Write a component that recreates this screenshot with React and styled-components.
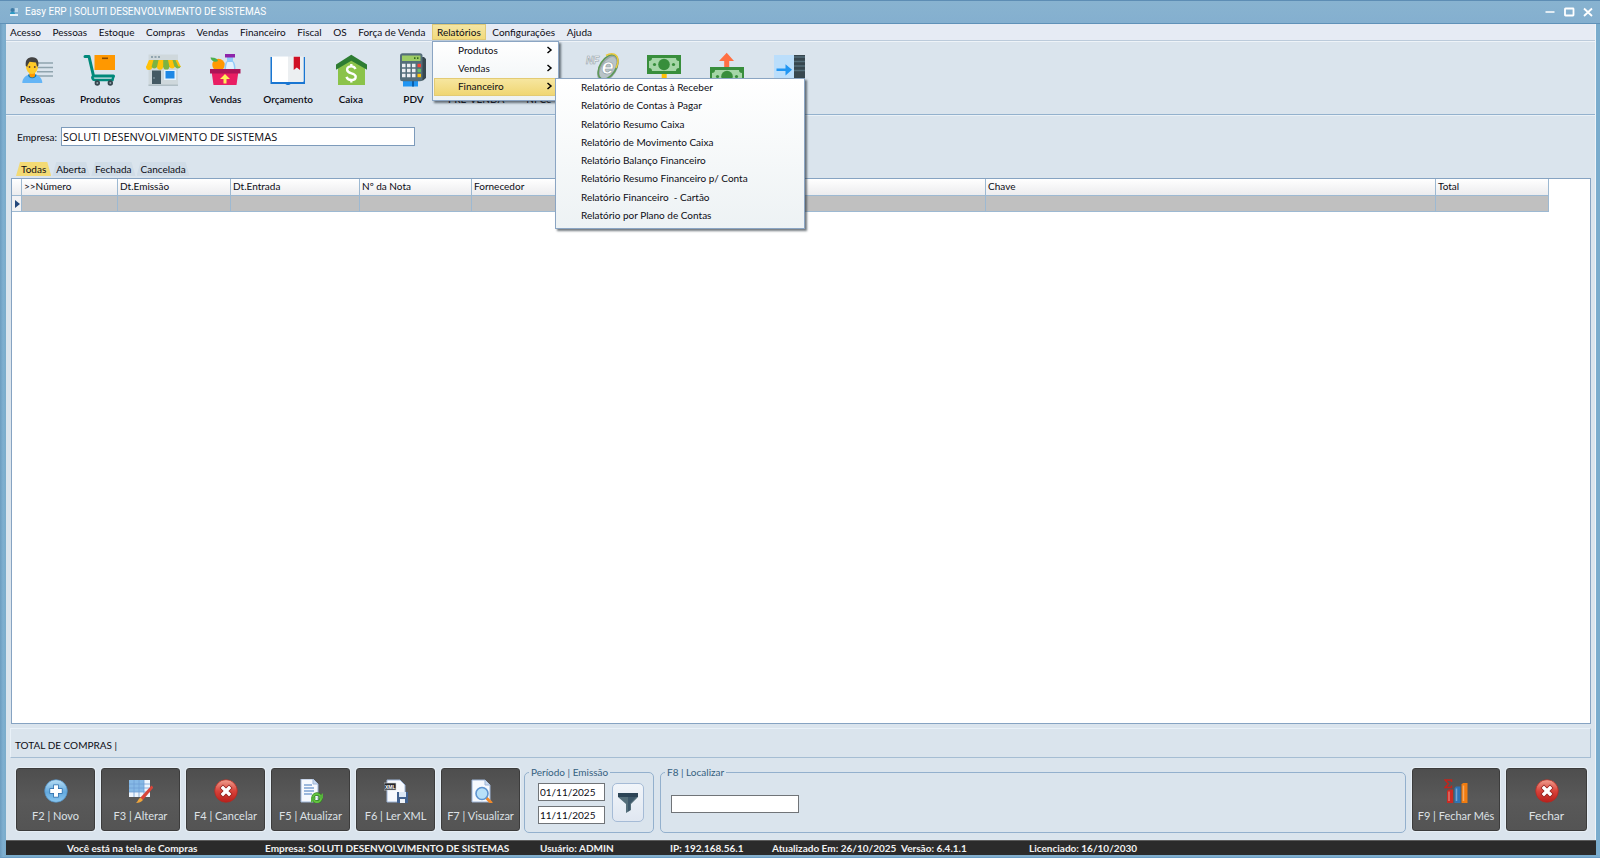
import React from 'react';
import styled, { createGlobalStyle } from 'styled-components';

const GlobalStyle = createGlobalStyle`
  *, *::before, *::after { box-sizing: border-box; }
  body { margin: 0; background: #dae4ed; }
  body, button, input, table, legend {
    font-family: Lato, "Open Sans", sans-serif;
    font-size: 10px;
    line-height: 14px;
    color: #0c0c14;
  }
  ul { list-style: none; margin: 0; padding: 0; }
  svg { display: block; flex: none; }
`;

const Window = styled.div`
  min-height: 100vh;
  display: flex;
  flex-direction: column;
  background: linear-gradient(90deg, #6c9cbf, #7fafd0 3px, #7aaccb 6px, #86b0cd 50%, #7aaccd);
  border-top: 1px solid #5d8db4;
  border-bottom: 1px solid #6a9cc4;
  padding: 0 4px 2px 6px;
`;

const TitleBar = styled.header`
  height: 23px;
  display: flex;
  align-items: center;
  gap: 6px;
  padding: 0 5px 0 9px;
  margin: 0 -4px 0 -6px;
  background: linear-gradient(#88b3d0, #84afcf);
  border-bottom: 1px solid #5f91b8;
`;

const Title = styled.h1`
  flex: 1;
  margin: 0;
  font: 400 10px/14px Roboto, sans-serif;
  color: #fff;
`;

const CaptionButton = styled.button`
  width: 13px;
  height: 14px;
  padding: 0;
  border: 0;
  background: none;
`;

const Client = styled.main`
  flex: 1;
  display: flex;
  flex-direction: column;
  background: #dae4ed;
  border-right: 1px solid #eef4f9;
`;

const MenuBar = styled.nav`
  height: 17px;
  background: #e6ebf4;
  border-bottom: 1px solid #bccbdb;
`;

const MenuList = styled.ul`
  display: flex;
  justify-content: space-between;
  width: 591px;
`;

const MenuEntry = styled.li`
  position: relative;
  background: ${(p) => (p.$open ? 'linear-gradient(#f4e6a8, #f2da78)' : 'none')};
  box-shadow: ${(p) => (p.$open ? 'inset 0 0 0 1px #e0c977' : 'none')};
`;

const MenuButton = styled.button`
  height: 16px;
  padding: 0 5px;
  border: 0;
  background: none;
  white-space: nowrap;
  ${MenuEntry}:first-child & { padding-left: 4px; }
`;

const Popup = styled.ul`
  position: absolute;
  z-index: 2;
  top: 17px;
  left: 0;
  width: 127px;
  padding: 0 1px 4px;
  background: linear-gradient(#ffffff, #edf2f4);
  border: 1px solid #8ba5c3;
  box-shadow: 2px 2px 2px rgba(40, 50, 60, 0.65);
`;

const SubPopup = styled(Popup)`
  display: grid;
  grid-auto-rows: 1fr;
  top: 0;
  left: 121px;
  width: 250px;
  height: 151px;
  padding-bottom: 3px;
`;

const PopupItem = styled.li`
  position: relative;
  background: ${(p) => (p.$active ? 'linear-gradient(#f7e7a2, #efd570)' : 'none')};
  box-shadow: ${(p) => (p.$active ? 'inset 0 0 0 1px #e3cb74' : 'none')};
`;

const PopupButton = styled.button`
  display: flex;
  align-items: center;
  justify-content: space-between;
  width: 100%;
  height: 18px;
  padding: 0 4px 2px 24px;
  border: 0;
  background: none;
  text-align: left;
  white-space: pre;
`;

const Toolbar = styled.nav`
  border-top: 1px solid #eef3f8;
  border-bottom: 1px solid #93b1cd;
  box-shadow: 0 1px 0 #eaf1f7;
  height: 74px;
  padding: 10px 0 0;
`;

const ToolGrid = styled.div`
  display: grid;
  grid-template-columns: repeat(13, minmax(0, 1fr));
  width: 815px;
`;

const ToolButton = styled.button`
  display: flex;
  flex-direction: column;
  align-items: center;
  gap: 4px;
  height: 58px;
  padding: 0;
  border: 0;
  background: none;
  font-weight: 600;
`;

const ToolIcon = styled.span`
  width: 36px;
  height: 36px;
`;

const CompanyRow = styled.div`
  display: flex;
  align-items: center;
  gap: 4px;
  padding: 12px 11px 0;
`;

const CompanyInput = styled.input`
  width: 354px;
  height: 19px;
  padding: 0 1px;
  border: 1px solid #7d9bbb;
  background: #fff;
  font: 500 11px/16px "Open Sans", sans-serif;
`;

const Tabs = styled.div`
  display: flex;
  gap: 1px;
  padding: 16px 0 2px 10px;
`;

const Tab = styled.button`
  height: 14px;
  padding: 0 ${(p) => (p.$active ? '5px' : '4px')};
  border: 0;
  clip-path: polygon(4px 0, calc(100% - 4px) 0, 100% 100%, 0 100%);
  background: ${(p) => (p.$active ? '#f3da74' : '#d0dce7')};
`;

const GridPanel = styled.section`
  flex: 1;
  min-height: 120px;
  margin: 0 4px 0 5px;
  border: 1px solid #86a3c2;
  background: #fff;
  overflow: hidden;
`;

const DataTable = styled.table`
  width: 1537px;
  table-layout: fixed;
  border-collapse: separate;
  border-spacing: 0;
`;

const HeadCell = styled.th`
  height: 17px;
  padding: 0 2px 2px;
  line-height: 13px;
  font-weight: 400;
  text-align: left;
  background: linear-gradient(#ffffff, #ececee);
  border-right: 1px solid #9db9d2;
  border-bottom: 1px solid #9db9d2;
`;

const DataCell = styled.td`
  height: 16px;
  padding: 0 0 0 3px;
  background: ${(p) => (p.$marker ? '#f2f2f4' : '#c0c0c0')};
  border-right: 1px solid #9db9d2;
  border-bottom: 1px solid #9db9d2;
`;

const TotalBar = styled.section`
  margin: 4px 4px 0 4px;
  height: 30px;
  padding: 9px 4px 0;
  border: 1px solid;
  border-color: #e9f1f8 #a5bdd3 #a5bdd3 #e9f1f8;
`;

const ActionBar = styled.footer`
  display: flex;
  align-items: center;
  gap: 6px;
  padding: 7px 8px 7px 10px;
`;

const ActionButton = styled.button`
  flex: none;
  display: flex;
  flex-direction: column;
  align-items: center;
  gap: 6px;
  width: ${(p) => p.$width || 79}px;
  height: 63px;
  padding: 10px 0 0;
  border: 1px solid #3c3c3c;
  border-radius: 3px;
  background: linear-gradient(#4e4e4e, #595959 50%, #545454);
  box-shadow: 0 0 0 1px #e6eef5;
  color: #dde1e5;
  font-size: ${(p) => (p.$large ? '12px' : '11px')};
  white-space: nowrap;
`;

const Group = styled.fieldset`
  flex: ${(p) => (p.$grow ? '1' : 'none')};
  display: flex;
  align-items: ${(p) => (p.$grow ? 'center' : 'flex-start')};
  gap: 7px;
  min-width: 0;
  height: 68px;
  margin: ${(p) => (p.$grow ? '0' : '0 0 0 -2px')};
  padding: ${(p) => (p.$grow ? '0 10px 4px' : '4px 9px 0 13px')};
  border: 1px solid #93b0cd;
  border-radius: 5px;
`;

const Legend = styled.legend`
  margin-left: ${(p) => (p.$grow ? '-6px' : '-9px')};
  padding: 0 2px;
  color: #35617f;
`;

const DateStack = styled.div`
  display: grid;
  gap: 5px;
`;

const FieldInput = styled.input`
  width: ${(p) => (p.$wide ? '128px' : '67px')};
  height: 18px;
  padding: 0 1px;
  border: 1px solid #707478;
  background: #fff;
`;

const FilterButton = styled.button`
  display: grid;
  place-items: center;
  width: 32px;
  height: 39px;
  padding: 0;
  border: 1px solid #a5bbd6;
  border-radius: 5px;
  background: linear-gradient(#f1f5fa, #e0e7f1);
`;

const StatusBar = styled.section`
  display: grid;
  grid-template-columns: 198px 275px 130px 102px 129px 128px 1fr;
  margin-right: -1px;
  height: 15px;
  padding-left: 61px;
  border-top: 1px solid #5c5c5c;
  background: #2b2b2b;
  color: #f2f2f2;
  font-weight: 700;
  white-space: nowrap;
`;

const Svg = ({ size = 36, children }) => (
  <svg width={size} height={size} viewBox={`0 0 ${size} ${size}`} aria-hidden="true">
    {children}
  </svg>
);

const Bill = ({ y }) => (
  <g transform={`translate(1 ${y})`}>
    <rect width="34" height="19" fill="#388e3c" />
    <path d="M5 3h24a3 3 0 0 0 3 3v7a3 3 0 0 0-3 3H5a3 3 0 0 0-3-3V6a3 3 0 0 0 3-3z" fill="#a5d6a7" />
    <circle cx="17" cy="9.500" r="5.800" fill="#388e3c" />
    <circle cx="7.500" cy="9.500" r="1.600" fill="#388e3c" />
    <circle cx="26.500" cy="9.500" r="1.600" fill="#388e3c" />
  </g>
);

const toolIcons = {
  pessoas: (
    <Svg>
      <path d="M18 11h16M18 15.500h16M18 19.700h16M18 24h16" stroke="#90a4ae" strokeWidth="1.500" />
      <path d="M3.300 31c0-5 3.500-7.500 7-8.500h6c3.500 1 7 3.500 7 8.500z" fill="#64b5f6" />
      <path d="M9 22.500h8.500c0 5-8.500 5-8.500 0z" fill="#0277bd" />
      <path d="M10.500 19h5.500v4.500c0 2.500-5.500 2.500-5.500 0z" fill="#ff9800" />
      <ellipse cx="13" cy="14.500" rx="6" ry="7.500" fill="#ffca28" />
      <path d="M6.800 14C6 7.500 9 5.300 13.500 5.300c5 0 6.500 4 5.800 8.700l-1.300.8-1-4.300-6.500-.8-2 3.500v1.600z" fill="#424242" />
      <circle cx="10.500" cy="15" r=".9" fill="#5d4037" />
      <circle cx="15.800" cy="15" r=".9" fill="#5d4037" />
    </Svg>
  ),
  produtos: (
    <Svg>
      <path d="M3 4.500h4l4.500 19.500h20" fill="none" stroke="#00897b" strokeWidth="3" strokeLinecap="round" strokeLinejoin="round" />
      <path d="M11.500 23.500c-2 2-1 4.500 1.500 4.500h17.500l1-4" fill="none" stroke="#00897b" strokeWidth="2.500" />
      <path d="M12.500 3H33v15H12.500z" fill="#ff9800" />
      <path d="M20 5.500h6v1.600h-6z" fill="#8a4b00" />
      <circle cx="15.300" cy="31" r="2.700" fill="#37474f" />
      <circle cx="28.300" cy="31" r="2.700" fill="#37474f" />
      <circle cx="15.300" cy="31" r="1" fill="#90a4ae" />
      <circle cx="28.300" cy="31" r="1" fill="#90a4ae" />
    </Svg>
  ),
  compras: (
    <Svg>
      <path d="M3.500 2.500H33V34H3.500z" fill="#cfd8dc" />
      <path d="M3.500 32.500H33V34H3.500z" fill="#b0bec5" />
      <path d="M6 5h2M9.500 5h2M13 5h2" stroke="#90a4ae" strokeWidth="1.800" />
      <path d="M7 18.500h9V32H7z" fill="#455a64" />
      <path d="M8 26h2" stroke="#90a4ae" />
      <path d="M19 18h12v10H19z" fill="#e3f2fd" />
      <path d="M20.500 19h9v7.500h-9z" fill="#1e88e5" />
      <path d="M4 8h28.500L36 15H1z" fill="#ffc107" />
      <path d="M8.500 8h5L12 15H6.500zM18.200 8h4.800l1.500 7h-6.300zM27.500 8h3l3 7h-4z" fill="#7cb342" />
      <path d="M1 14.500h6a3 3 0 0 1-6 1zM12 14.500h6a3 3 0 0 1-6 .5zM24.300 14.500h5.700a3 3 0 0 1-5.700 0z" fill="#ffc107" />
      <path d="M6.500 14.500h5.700a3 3 0 0 1-5.700 0zM18.200 14.500h6.200a3 3 0 0 1-6.200 0zM30 14.500h5.700a3 3 0 0 1-5.700 0z" fill="#7cb342" />
    </Svg>
  ),
  vendas: (
    <Svg>
      <circle cx="11.500" cy="13" r="6.200" fill="#ff9800" />
      <path d="M11 9C8 11 4 9 3.500 5.500 7 5.500 10 6 11 9z" fill="#4caf50" />
      <path d="M20 5h6v4c2 2 2.500 4 2.500 9h-11c0-5 .5-7 2.500-9z" fill="#90caf9" />
      <path d="M20.500 10h5c1 2 1.500 4 1.500 7h-8c0-3 .5-5 1.500-7z" fill="#e3f2fd" />
      <path d="M18 2h10v3.500H18z" fill="#8e24aa" />
      <path d="M4.500 19h27l-2 14h-23z" fill="#e91e63" />
      <path d="M3 17h30.500v4.500H3z" fill="#ad1457" />
      <path d="M18 22l5 5h-3.500v4.500h-3V27H13z" fill="#ffee58" />
    </Svg>
  ),
  orcamento: (
    <Svg>
      <path d="M.5 5h2v24h31V5H35v27H20.500c-1 1.300-4 1.300-5 0H.5z" fill="#1976d2" />
      <path d="M2 4.500h16v25.500H2z" fill="#fff" />
      <path d="M18 4.500h15.500v25.500H18z" fill="#eceff1" />
      <path d="M23.700 4.700H30V18l-3.200-2.500-3.100 2.500z" fill="#d01024" />
    </Svg>
  ),
  caixa: (
    <Svg>
      <path d="M5 14 18 5.500 32 14v19H5z" fill="#8bc34a" />
      <path d="M18.300 2.800 34 12.500v5.200l-15.700-9-15.300 9v-5.200z" fill="#2e7d32" />
      <path d="M22.500 17c-.8-2-2.300-2.600-4.200-2.600-2.400 0-4.200 1.200-4.200 3.300 0 4.600 8.600 2.600 8.600 7 0 2.200-2 3.300-4.400 3.300-2.500 0-4.200-1.200-4.800-3.200M18.300 12v3M18.300 27.500v3" fill="none" stroke="#fff" strokeWidth="2.400" />
    </Svg>
  ),
  pdv: (
    <Svg>
      <path d="M25 5h4l2 2v19l-3 2.500h-3z" fill="#37474f" />
      <path d="M8 29h15v5.500H8z" fill="#2196f3" />
      <path d="M17 29h2v5.500h-2z" fill="#0d5ea8" />
      <rect x="5" y="1.300" width="22.500" height="28" rx="2.500" fill="#546e7a" />
      <path d="M7 3.500h18.500V9H7z" fill="#9ccc65" />
      <path d="M19 6.200h1.500M22 6.200h1.500" stroke="#33691e" strokeWidth="1.800" />
      <path d="M7 13.500h13.500M7 18.500h13.500M7 23.500h13.500" stroke="#eceff1" strokeWidth="3.400" strokeDasharray="3.500 1.500" />
      <path d="M22.500 11.800H26v3.400h-3.500z" fill="#f44336" />
      <path d="M22.500 16.800H26v3.400h-3.500z" fill="#66bb6a" />
      <path d="M22.500 21.800H26v3.400h-3.500z" fill="#ffc107" />
    </Svg>
  ),
  nfe: (
    <Svg>
      <ellipse cx="24" cy="16" rx="7.500" ry="13.500" fill="#b9c4c8" stroke="#9aa7ab" strokeWidth="2.500" transform="rotate(32 24 16)" />
      <ellipse cx="24" cy="15" rx="8" ry="13.500" fill="none" stroke="#5d9a55" strokeWidth="1.500" transform="rotate(32 24 15)" />
      <path d="M22 3.500c6-3.500 12-1.500 12 5.500 0 3-1 5-2 7" fill="none" stroke="#e9c840" strokeWidth="1.600" />
      <text x="2" y="12" fontSize="10" fontWeight="700" fontStyle="italic" fill="#fff" stroke="#93a1a8" strokeWidth=".6" fontFamily="Liberation Sans, sans-serif">NF</text>
      <text x="17.500" y="22" fontSize="22" fontWeight="700" fontStyle="italic" fill="#fff" stroke="#8d9a9e" strokeWidth=".6" fontFamily="Liberation Sans, sans-serif">e</text>
    </Svg>
  ),
  receber: (
    <Svg>
      <Bill y={3} />
      <path d="M15.700 22h5v14h-5z" fill="#ffc107" />
    </Svg>
  ),
  pagar: (
    <Svg>
      <path d="M17.700.7 25 9h-4.800v6h-5V9H10z" fill="#ff7043" />
      <Bill y={15} />
    </Svg>
  ),
  sair: (
    <Svg>
      <path d="M2 3h20v30H2z" fill="#bbdefb" />
      <path d="M22 3h11v30H22z" fill="#37474f" />
      <path d="M22 5h11M22 9.500h11M22 14h11M22 18.500h11" stroke="#546e7a" strokeWidth="1.500" />
      <path d="M4.500 16.500h9v-4.300l6.500 5.600-6.500 5.600v-4.300h-9z" fill="#2196f3" />
    </Svg>
  ),
};

const Gradients = () => (
  <svg width="0" height="0" aria-hidden="true">
    <defs>
      <linearGradient id="blueBall" x1="0" y1="0" x2="0" y2="1">
        <stop offset="0" stopColor="#b9dff5" />
        <stop offset=".55" stopColor="#63a9de" />
        <stop offset="1" stopColor="#8cc8f0" />
      </linearGradient>
      <linearGradient id="redBall" x1="0" y1="0" x2="0" y2="1">
        <stop offset="0" stopColor="#f0a090" />
        <stop offset=".5" stopColor="#d8423a" />
        <stop offset="1" stopColor="#b8201c" />
      </linearGradient>
    </defs>
  </svg>
);

const CancelBall = () => (
  <Svg size={24}>
    <circle cx="12" cy="12" r="11.300" fill="url(#redBall)" stroke="#b42820" strokeWidth=".7" />
    <path d="M9 9l6 6M15 9l-6 6" stroke="#8f1a16" strokeWidth="4.800" strokeLinecap="square" />
    <path d="M9 9l6 6M15 9l-6 6" stroke="#fff" strokeWidth="3.400" strokeLinecap="square" />
  </Svg>
);

const Page = () => (
  <path d="M3 1h13l5 5v17H3z" fill="#f6f9fe" stroke="#9db4d6" />
);

const actionIcons = {
  novo: (
    <Svg size={24}>
      <circle cx="12" cy="12" r="11.300" fill="url(#blueBall)" stroke="#4f8fc6" strokeWidth=".7" />
      <path d="M12 5.500v13M5.500 12h13" stroke="#2f6ca8" strokeWidth="5.400" />
      <path d="M12 6.200v11.600M6.200 12h11.600" stroke="#fff" strokeWidth="4" />
    </Svg>
  ),
  alterar: (
    <Svg size={24}>
      <path d="M0 1h21v17H0z" fill="#eef5fd" />
      <path d="M0 1h15v12H0z" fill="#86b9e6" />
      <path d="M0 5h21M0 9h21M0 13h21M5 1v17M10 1v17M15 1v17" stroke="#6f9fd4" strokeWidth=".8" />
      <path d="M11 19 22.500 6.500l2 2L14 21z" fill="#d8453a" />
      <path d="M11.500 18.500l2.500 2.500c-1.500 2-4 3-7 3 2-1.500 2-4 4.500-5.500z" fill="#f0a63c" />
    </Svg>
  ),
  cancelar: <CancelBall />,
  atualizar: (
    <Svg size={24}>
      <path d="M2 0h12l5 5v18H2z" fill="#f6f9fe" stroke="#9db4d6" />
      <path d="M14 0v5h5" fill="#c9daf0" stroke="#9db4d6" />
      <path d="M5 6h8M5 9h10M5 12h10M5 15h8" stroke="#7ea3d2" strokeWidth="1.600" />
      <circle cx="18" cy="19" r="4" fill="none" stroke="#2c7a1e" strokeWidth="3.400" />
      <circle cx="18" cy="19" r="4" fill="none" stroke="#62c23f" strokeWidth="2.200" strokeDasharray="10 2.560" />
      <path d="M24 14v5.500h-5.500zM12 24v-5.500h5.500z" fill="#55b33b" />
    </Svg>
  ),
  xml: (
    <Svg size={24}>
      <Page />
      <path d="M0 4h12v7H0z" fill="#26272c" stroke="#d5d8de" strokeWidth=".6" />
      <text x="1" y="9.600" fontSize="5" fontWeight="700" fill="#fff" fontFamily="Liberation Sans, sans-serif">XML</text>
      <path d="M13 13h11v11H13z" fill="#41618f" />
      <path d="M15 13h7v5h-7z" fill="#dbe7f6" />
      <path d="M16 20h5v4h-5z" fill="#eef2f8" />
    </Svg>
  ),
  visualizar: (
    <Svg size={24}>
      <Page />
      <path d="M16 1v5h5" fill="#c9daf0" stroke="#9db4d6" />
      <path d="M17.500 19l4.500 4.500" stroke="#f08a2c" strokeWidth="3" strokeLinecap="round" />
      <circle cx="13" cy="14.500" r="6" fill="#b8e0f8" stroke="#5d93d0" strokeWidth="1.600" />
    </Svg>
  ),
  mes: (
    <Svg size={24}>
      <path d="M7.500 3V1H1l3.500 3.800L1 8.500h6.500v-2" fill="none" stroke="#c4241c" strokeWidth="1.500" />
      <path d="M3 12l1.500-1.500H9V24H3z" fill="#cc2a22" />
      <path d="M10.500 9 12 7.500h4.500V24h-6z" fill="#2f74b5" />
      <path d="M17.500 5.500 19 4h4.500v20h-6z" fill="#f07c10" />
      <path d="M5 12.500V22M12.500 9.500V22M19.500 6.500V22" stroke="#fff" strokeOpacity=".35" strokeWidth="1.500" />
    </Svg>
  ),
  fechar: <CancelBall />,
};

const Chevron = () => (
  <svg width="7" height="8" viewBox="0 0 7 8" aria-hidden="true">
    <path d="M1.500 1 5 4 1.500 7" fill="none" stroke="#000" strokeWidth="1.500" />
  </svg>
);

const menus = ['Acesso', 'Pessoas', 'Estoque', 'Compras', 'Vendas', 'Financeiro', 'Fiscal', 'OS', 'Força de Venda', 'Relatórios', 'Configurações', 'Ajuda'];

const reports = [
  'Relatório de Contas à Receber',
  'Relatório de Contas à Pagar',
  'Relatório Resumo Caixa',
  'Relatório de Movimento Caixa',
  'Relatório Balanço Financeiro',
  'Relatório Resumo Financeiro p/ Conta',
  'Relatório Financeiro  - Cartão',
  'Relatório por Plano de Contas',
];

const tools = [
  { label: 'Pessoas', icon: 'pessoas' },
  { label: 'Produtos', icon: 'produtos' },
  { label: 'Compras', icon: 'compras' },
  { label: 'Vendas', icon: 'vendas' },
  { label: 'Orçamento', icon: 'orcamento' },
  { label: 'Caixa', icon: 'caixa' },
  { label: 'PDV', icon: 'pdv' },
  { label: 'PRÉ-VENDA' },
  { label: 'NFCe' },
  { icon: 'nfe', name: 'NFe' },
  { icon: 'receber', name: 'Receber' },
  { icon: 'pagar', name: 'Pagar' },
  { icon: 'sair', name: 'Sair' },
];

const columns = [
  ['', 10],
  ['>>Número', 96],
  ['Dt.Emissão', 113],
  ['Dt.Entrada', 129],
  ['Nº da Nota', 112],
  ['Fornecedor', 514],
  ['Chave', 450],
  ['Total', 113],
];

const actions = [
  ['F2 | Novo', 'novo'],
  ['F3 | Alterar', 'alterar'],
  ['F4 | Cancelar', 'cancelar'],
  ['F5 | Atualizar', 'atualizar'],
  ['F6 | Ler XML', 'xml'],
  ['F7 | Visualizar', 'visualizar'],
];

const status = [
  'Você está na tela de Compras',
  'Empresa: SOLUTI DESENVOLVIMENTO DE SISTEMAS',
  'Usuário: ADMIN',
  'IP: 192.168.56.1',
  'Atualizado Em: 26/10/2025',
  'Versão: 6.4.1.1',
  'Licenciado: 16/10/2030',
];

const ReportsMenu = () => (
  <Popup>
    <PopupItem><PopupButton>Produtos<Chevron /></PopupButton></PopupItem>
    <PopupItem><PopupButton>Vendas<Chevron /></PopupButton></PopupItem>
    <PopupItem $active>
      <PopupButton>Financeiro<Chevron /></PopupButton>
      <SubPopup>
        {reports.map((r) => (
          <PopupItem key={r}><PopupButton>{r}</PopupButton></PopupItem>
        ))}
      </SubPopup>
    </PopupItem>
  </Popup>
);

export default function App() {
  return (
    <Window>
      <GlobalStyle />
      <TitleBar>
        <svg width="10" height="10" viewBox="0 0 10 10" aria-hidden="true">
          <path d="M1 9V7h8v2z" fill="#e7f1f8" />
          <circle cx="3.500" cy="3" r="2" fill="#3f7ba6" />
          <path d="M1 7c0-3 5-3 5 0z" fill="#2d9ac4" />
          <path d="M6 1h3v4H6z" fill="#b9d7ea" />
        </svg>
        <Title>Easy ERP | SOLUTI DESENVOLVIMENTO DE SISTEMAS</Title>
        <CaptionButton aria-label="Minimizar">
          <svg width="12" height="12" viewBox="0 0 12 12"><path d="M1.500 6h9" stroke="#fff" strokeWidth="1.500" /></svg>
        </CaptionButton>
        <CaptionButton aria-label="Maximizar">
          <svg width="12" height="12" viewBox="0 0 12 12"><rect x="2" y="2.500" width="8.500" height="7" rx=".5" fill="none" stroke="#fff" strokeWidth="1.800" /></svg>
        </CaptionButton>
        <CaptionButton aria-label="Fechar janela">
          <svg width="12" height="12" viewBox="0 0 12 12"><path d="M2 2.500l8 7.500M10 2.500 2 10" stroke="#fff" strokeWidth="1.800" /></svg>
        </CaptionButton>
      </TitleBar>

      <Client>
        <MenuBar>
          <MenuList>
            {menus.map((m) => (
              <MenuEntry key={m} $open={m === 'Relatórios'}>
                <MenuButton>{m}</MenuButton>
                {m === 'Relatórios' && <ReportsMenu />}
              </MenuEntry>
            ))}
          </MenuList>
        </MenuBar>

        <Toolbar>
          <ToolGrid>
            {tools.map((t) => (
              <ToolButton key={t.label || t.name} aria-label={t.name}>
                <ToolIcon>{toolIcons[t.icon]}</ToolIcon>
                {t.label}
              </ToolButton>
            ))}
          </ToolGrid>
        </Toolbar>

        <CompanyRow>
          <label htmlFor="empresa">Empresa:</label>
          <CompanyInput id="empresa" defaultValue="SOLUTI DESENVOLVIMENTO DE SISTEMAS" />
        </CompanyRow>

        <Tabs>
          <Tab $active>Todas</Tab>
          <Tab>Aberta</Tab>
          <Tab>Fechada</Tab>
          <Tab>Cancelada</Tab>
        </Tabs>

        <GridPanel>
          <DataTable>
            <colgroup>
              {columns.map(([name, width]) => (
                <col key={name} width={width} />
              ))}
            </colgroup>
            <thead>
              <tr>
                {columns.map(([name]) => (
                  <HeadCell key={name}>{name}</HeadCell>
                ))}
              </tr>
            </thead>
            <tbody>
              <tr>
                {columns.map(([name]) => (
                  <DataCell key={name} $marker={!name}>
                    {!name && (
                      <svg width="5" height="8" viewBox="0 0 5 8" aria-hidden="true"><path d="M0 0l5 4-5 4z" fill="#24487c" /></svg>
                    )}
                  </DataCell>
                ))}
              </tr>
            </tbody>
          </DataTable>
        </GridPanel>

        <TotalBar>TOTAL DE COMPRAS |</TotalBar>

        <ActionBar>
          {actions.map(([label, icon]) => (
            <ActionButton key={icon}>
              {actionIcons[icon]}
              {label}
            </ActionButton>
          ))}
          <Group>
            <Legend>Período | Emissão</Legend>
            <DateStack>
              <FieldInput aria-label="Data inicial" defaultValue="01/11/2025" />
              <FieldInput aria-label="Data final" defaultValue="11/11/2025" />
            </DateStack>
            <FilterButton aria-label="Filtrar">
              <svg width="22" height="22" viewBox="0 0 22 22" aria-hidden="true">
                <path d="M1 1h20v4l-7 7v6l-5 3v-9L1 5z" fill="#546e7a" />
                <path d="M1 1h20v4H1z" fill="#2c4456" />
                <path d="M11 5h8l-6 6.500V18l-2 1.500z" fill="#3d586a" />
              </svg>
            </FilterButton>
          </Group>
          <Group $grow>
            <Legend $grow>F8 | Localizar</Legend>
            <FieldInput $wide aria-label="Localizar" />
          </Group>
          <ActionButton $width={88}>
            {actionIcons.mes}
            F9 | Fechar Mês
          </ActionButton>
          <ActionButton $width={81} $large>
            {actionIcons.fechar}
            Fechar
          </ActionButton>
        </ActionBar>

        <StatusBar>
          {status.map((s) => (
            <span key={s}>{s}</span>
          ))}
        </StatusBar>
      </Client>
      <Gradients />
    </Window>
  );
}
